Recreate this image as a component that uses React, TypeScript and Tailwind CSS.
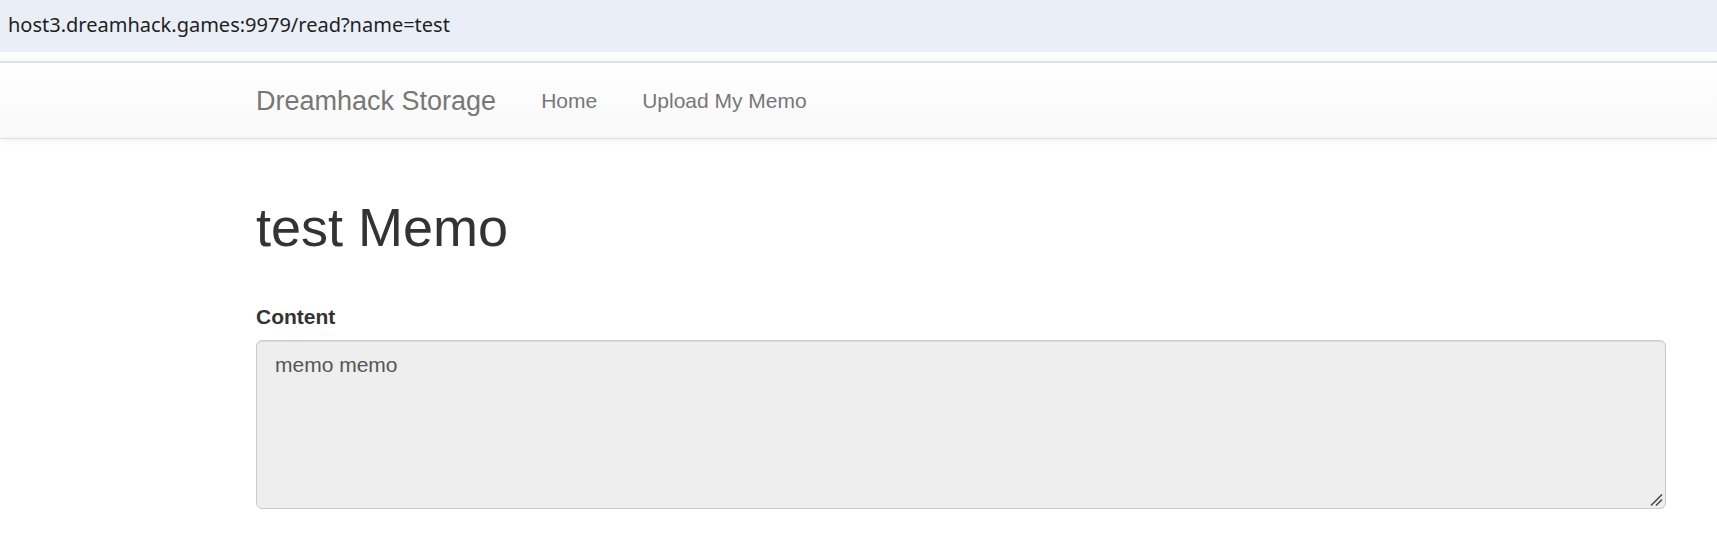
import React from "react";

export default function App() {
  return (
    <div className="w-[1717px] min-h-[539px] bg-white overflow-hidden">
      <div
        className="h-[52px] bg-[#eaeef6] flex items-center pl-[8px] text-[20px] text-[#1f1f1f]"
        style={{ fontFamily: '"Noto Sans", "Open Sans", sans-serif' }}
      >
        <span className="relative top-[-1px]">host3.dreamhack.games:9979/read?name=test</span>
      </div>
      <div className="h-[9px]" />
      <div style={{ fontFamily: '"Liberation Sans", Arial, sans-serif' }}>
        <nav className="h-[78px] border-t-2 border-b border-t-[#dde2df] border-b-[#dedede] bg-linear-to-b from-white to-[#f8f8f8] shadow-[0_1px_7px_rgba(0,0,0,0.075)] flex items-center pl-[256px]">
          <a className="text-[27px] leading-[30px] text-[#777] pr-[22.5px]">Dreamhack Storage</a>
          <a className="text-[21px] leading-[30px] text-[#777] px-[22.5px]">Home</a>
          <a className="text-[21px] leading-[30px] text-[#777] px-[22.5px]">Upload My Memo</a>
        </nav>
        <main className="ml-[256px] w-[1410px]">
          <h1 className="mt-[59.4px] text-[54px] leading-[59.4px] text-[#333] font-normal">test Memo</h1>
          <div className="mt-[44.7px]">
            <label className="block text-[21px] leading-[30px] font-bold text-[#333] mb-[8px]">Content</label>
            <div className="relative w-[1410px] h-[169px]">
              <textarea
                readOnly
                defaultValue="memo memo"
                className="block w-full h-full resize-none bg-[#eeeeee] border-[1.5px] border-[#cccccc] rounded-[6px] px-[18px] py-[9px] text-[21px] leading-[30px] text-[#555] shadow-[inset_0_1px_1px_rgba(0,0,0,0.075)] outline-none"
                style={{ fontFamily: '"Liberation Sans", Arial, sans-serif' }}
              />
              <svg
                className="absolute right-[2px] bottom-[2px] pointer-events-none"
                width="14"
                height="14"
                viewBox="0 0 14 14"
              >
                <line x1="1" y1="12.5" x2="12" y2="1.5" stroke="#4a4a4a" strokeWidth="1.6" />
                <line x1="6" y1="12.5" x2="12" y2="6.5" stroke="#4a4a4a" strokeWidth="1.6" />
              </svg>
            </div>
          </div>
        </main>
      </div>
    </div>
  );
}
